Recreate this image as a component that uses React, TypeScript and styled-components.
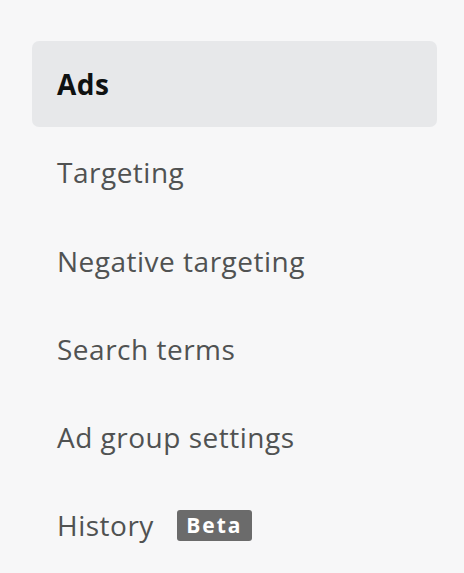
import styled, { createGlobalStyle } from "styled-components";

const GlobalStyle = createGlobalStyle`
  html, body {
    margin: 0;
    padding: 0;
    background-color: #f7f7f8;
  }
`;

const items = [
  { label: "Ads", active: true },
  { label: "Targeting" },
  { label: "Negative targeting" },
  { label: "Search terms" },
  { label: "Ad group settings" },
  { label: "History", beta: true },
];

const App = () => {
  return (
    <>
      <GlobalStyle />
      <Nav>
        {items.map((item) => (
          <NavItem key={item.label} $active={!!item.active}>
            {item.label}
            {item.beta && <Badge>Beta</Badge>}
          </NavItem>
        ))}
      </Nav>
    </>
  );
};

const Nav = styled.nav`
  display: flex;
  flex-direction: column;
  gap: 2.3px;
  width: 405px;
  padding: 41px 0 0 32px;
  font-family: "Open Sans", "Noto Sans", sans-serif;
`;

const NavItem = styled.div<{ $active: boolean }>`
  display: flex;
  align-items: center;
  height: 86px;
  padding-left: 25px;
  border-radius: 7px;
  font-size: 28px;
  letter-spacing: 0.5px;
  font-weight: ${(p) => (p.$active ? 700 : 400)};
  color: ${(p) => (p.$active ? "#0f1111" : "#505252")};
  background-color: ${(p) => (p.$active ? "#e7e8ea" : "transparent")};
  cursor: pointer;
`;

const Badge = styled.span`
  display: inline-flex;
  align-items: center;
  justify-content: center;
  margin-left: 23px;
  width: 75px;
  height: 31px;
  border-radius: 3px;
  background-color: #6b6b6b;
  color: #ffffff;
  font-size: 21px;
  font-weight: 700;
  letter-spacing: 2px;
`;

export default App;
